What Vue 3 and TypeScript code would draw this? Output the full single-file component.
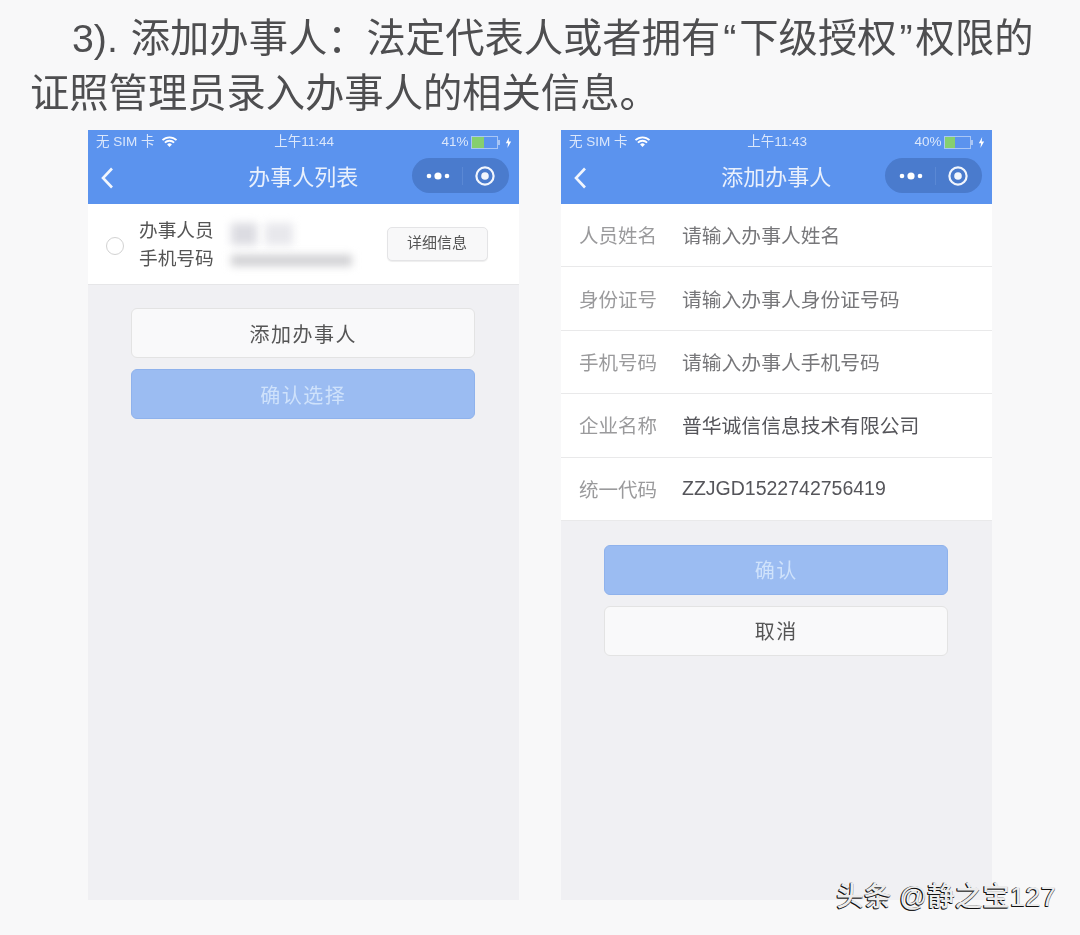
<script setup lang="ts">
interface Field { label: string; value: string; tone: string }
const fields: Field[] = [
  { label: '人员姓名', value: '请输入办事人姓名', tone: '' },
  { label: '身份证号', value: '请输入办事人身份证号码', tone: '' },
  { label: '手机号码', value: '请输入办事人手机号码', tone: '' },
  { label: '企业名称', value: '普华诚信信息技术有限公司', tone: 'filled' },
  { label: '统一代码', value: 'ZZJGD1522742756419', tone: 'filled code' },
]
const phones = [
  { time: '上午11:44', battery: '41%', title: '办事人列表' },
  { time: '上午11:43', battery: '40%', title: '添加办事人' },
]
</script>

<template>
  <div class="page">
    <div class="soft">
      <div class="heading">
        <p class="line first">3). 添加办事人：法定代表人或者拥有<span class="q">“</span>下级授权<span class="q">”</span>权限的</p>
        <p class="line">证照管理员录入办事人的相关信息。</p>
      </div>
      <div class="phones">
        <section v-for="(phone, i) in phones" :key="phone.title" class="phone">
          <header class="top">
            <div class="status">
              <span class="carrier">无 SIM 卡
                <svg class="wifi" width="17" height="12" viewBox="0 0 16 12">
                  <path d="M1 4.2a10 10 0 0 1 14 0M3.4 6.6a6.6 6.6 0 0 1 9.2 0" fill="none" stroke="#fff" stroke-width="1.8" />
                  <path d="M5.6 8.4a3.4 3.4 0 0 1 4.8 0L8 11z" fill="#fff" />
                </svg>
              </span>
              <span class="time">{{ phone.time }}</span>
              <span class="power">
                {{ phone.battery }}
                <span class="battery"><i :class="{ low: i === 1 }"></i></span>
                <span class="nub"></span>
                <svg width="7" height="11" viewBox="0 0 6 10"><path d="M3.6 0 0.6 5.6h2L2 10l3.4-6H3.2z" fill="#fff" /></svg>
              </span>
            </div>
            <div class="nav">
              <svg class="back" width="16" height="22" viewBox="0 0 16 22">
                <path d="M12 1.5 3 11l9 9.5" fill="none" stroke="#f2f6fd" stroke-width="2.6" />
              </svg>
              <h2 class="title">{{ phone.title }}</h2>
              <div class="capsule">
                <svg width="24" height="8" viewBox="0 0 24 8">
                  <circle cx="3" cy="4" r="2.3" fill="#fff" /><circle cx="12" cy="4" r="3.6" fill="#fff" /><circle cx="21" cy="4" r="2.3" fill="#fff" />
                </svg>
                <span class="divider"></span>
                <svg width="22" height="22" viewBox="0 0 22 22">
                  <circle cx="11" cy="11" r="8.6" fill="none" stroke="#f2f6fd" stroke-width="2.2" /><circle cx="11" cy="11" r="3.8" fill="#f2f6fd" />
                </svg>
              </div>
            </div>
          </header>

          <template v-if="i === 0">
            <div class="person">
              <span class="radio"></span>
              <div class="person-labels"><span>办事人员</span><span>手机号码</span></div>
              <div class="person-values">
                <div class="name-row"><span class="smear name-a"></span><span class="smear name-b"></span></div>
                <span class="smear phone-no"></span>
              </div>
              <button class="detail" type="button">详细信息</button>
            </div>
            <div class="actions list-actions">
              <button class="btn light" type="button">添加办事人</button>
              <button class="btn primary" type="button">确认选择</button>
            </div>
          </template>

          <template v-else>
            <div class="form">
              <div v-for="f in fields" :key="f.label" class="row">
                <span class="label">{{ f.label }}</span>
                <span class="value" :class="f.tone">{{ f.value }}</span>
              </div>
            </div>
            <div class="actions form-actions">
              <button class="btn primary" type="button">确认</button>
              <button class="btn light" type="button">取消</button>
            </div>
          </template>
        </section>
      </div>
    </div>
    <div class="mark">头条 @静之宝127</div>
  </div>
</template>

<style>
html, body { margin: 0; background: #f8f8f9; }
</style>

<style scoped>
.page {
  position: relative;
  width: 1080px;
  height: 935px;
  overflow: hidden;
  background: #f8f8f9;
  font-family: "Liberation Sans", "Noto Sans CJK SC", sans-serif;
  color: #333;
}
.soft { filter: blur(0.5px); }
.heading { padding: 11px 0 0 30px; height: 130px; box-sizing: border-box; }
.line { margin: 0; font-size: 39.3px; line-height: 54.5px; color: #4e4e50; white-space: nowrap; }
.first { padding-left: 42px; word-spacing: 2px; }
.q { margin: 0 3px; }
.phones { display: flex; gap: 42.5px; padding-left: 88px; }
.phone { width: 430.5px; height: 770px; background: #f0f0f3; display: flex; flex-direction: column; }
.top { height: 74px; background: #5b93ee; color: #fff; flex: none; }
.status {
  height: 25px;
  box-sizing: border-box;
  display: grid;
  grid-template-columns: 1fr 1fr 1fr;
  align-items: center;
  padding: 0 6px 1px 8px;
  font-size: 13.5px;
  line-height: 16px;
  color: #dbe7fb;
}
.carrier { display: flex; align-items: center; gap: 6px; white-space: nowrap; }
.time { text-align: center; white-space: nowrap; }
.power { display: flex; justify-content: flex-end; align-items: center; gap: 3px; }
.battery { width: 27px; height: 13px; border: 1px solid #a9c6f5; box-sizing: border-box; display: block; margin-right: -3px; }
.battery i { display: block; width: 12px; height: 11px; background: #86cf6f; }
.battery i.low { width: 10px; }
.nub { width: 2px; height: 5px; background: #a9c6f5; margin-right: 2px; }
.nav { position: relative; height: 49px; display: flex; align-items: center; justify-content: center; }
.back { position: absolute; left: 12px; top: 12px; }
.title { margin: 0 0 4px; font-size: 22px; font-weight: 400; line-height: 45px; color: #e9f0fc; }
.capsule {
  position: absolute;
  right: 9.5px;
  top: 3px;
  width: 97px;
  height: 35px;
  border-radius: 18px;
  background: #4a7bcd;
  display: flex;
  align-items: center;
  justify-content: space-between;
  padding: 0 13px 0 14px;
  box-sizing: border-box;
}
.divider { width: 1px; height: 18px; background: #5a88d4; }
.person {
  height: 81px;
  background: #fff;
  border-bottom: 1px solid #e6e6e8;
  display: flex;
  align-items: center;
  box-sizing: border-box;
  flex: none;
}
.radio { width: 18px; height: 18px; border: 1px solid #d2d2d2; border-radius: 50%; margin: 3px 0 0 18px; box-sizing: border-box; flex: none; }
.person-labels { display: flex; flex-direction: column; margin: 1px 0 0 15px; font-size: 18.7px; line-height: 27.5px; color: #555; white-space: nowrap; }
.person-values { display: flex; flex-direction: column; gap: 10px; margin-left: 17px; flex: none; }
.name-row { display: flex; gap: 8px; }
.smear { display: block; filter: blur(4px); }
.name-a { width: 26px; height: 22px; background: #dcdce2; }
.name-b { width: 28px; height: 22px; background: #e8e8ec; }
.phone-no { width: 121px; height: 11px; background: #cfcfd2; }
.detail {
  width: 101px;
  height: 34px;
  margin-left: auto;
  margin-right: 31px;
  background: #f8f8f9;
  border: 1px solid #e4e4e6;
  border-radius: 5px;
  box-shadow: 0 1px 1px #eeeeee;
  font: inherit;
  font-size: 15px;
  line-height: 30px;
  color: #555;
  padding: 0 0 2px;
}
.actions { display: flex; flex-direction: column; align-items: center; gap: 11px; }
.list-actions { margin-top: 23px; }
.form-actions { margin-top: 24px; }
.btn { width: 344px; height: 50px; border-radius: 6px; font: inherit; font-size: 20px; letter-spacing: 1.5px; padding: 0; }
.btn.light { background: #f9f9fa; border: 1px solid #e3e3e3; color: #555; }
.btn.primary { background: #9bbcf2; border: 1px solid #8fb2ec; color: #cfe2fb; }
.form { background: #fff; flex: none; }
.row {
  height: 63.4px;
  box-sizing: border-box;
  border-bottom: 1px solid #e9e9ea;
  display: flex;
  align-items: center;
  padding: 0 0 1px 18px;
  font-size: 19.5px;
}
.label { width: 103px; color: #9a9a9c; flex: none; }
.value { color: #77777a; white-space: nowrap; font-size: 19.8px; }
.value.filled { color: #55555a; }
.value.code { font-size: 19.5px; }
.mark {
  position: absolute;
  right: 24px;
  bottom: 22px;
  font-size: 27.6px;
  font-weight: 500;
  line-height: 32px;
  color: #ececec;
  white-space: nowrap;
  text-shadow: -1px 1px 0 #111, -1px 0 0 #333, 0 1px 0 #444;
}
</style>
